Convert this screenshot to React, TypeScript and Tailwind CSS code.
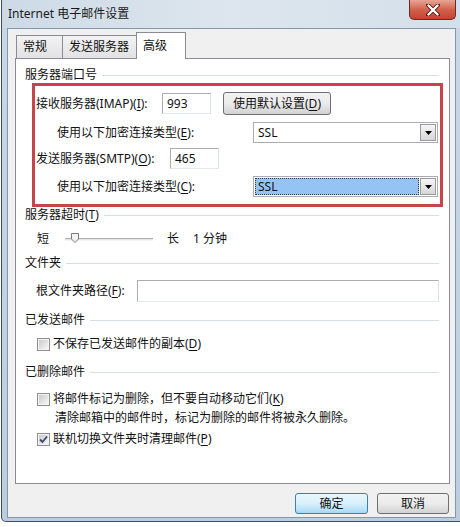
import React from "react";

const FONT = { fontFamily: '"Noto Sans", "Noto Sans CJK SC", sans-serif' };

function U({ c }: { c: string }) {
  return <span className="underline underline-offset-[2px]">{c}</span>;
}

function Header({ children }: { children: React.ReactNode }) {
  return (
    <div className="flex items-center h-[16px] mr-[5px]">
      <span className="whitespace-nowrap">{children}</span>
      <div className="flex-1 h-px bg-[#d5dfe5] ml-[5px]" />
    </div>
  );
}

function Checkbox({ checked }: { checked?: boolean }) {
  return (
    <div className="w-[13px] h-[13px] border border-[#8e8f8f] bg-[#f4f4f4] p-[1px] shrink-0">
      <div className="w-full h-full bg-gradient-to-br from-[#cbcbcb] to-[#f6f6f6] flex items-center justify-center">
        {checked && (
          <svg width="9" height="9" viewBox="0 0 9 9">
            <path d="M1 4.5 L3.5 7 L8 1.5" fill="none" stroke="#3b4a6b" strokeWidth="1.8" />
          </svg>
        )}
      </div>
    </div>
  );
}

function Select({ highlight }: { highlight?: boolean }) {
  return (
    <div className="w-[185px] h-[21px] border border-[#abadb3] bg-white flex items-center p-[1px]">
      <div
        className={
          highlight
            ? "flex-1 h-full bg-[#95c4f4] border border-dotted border-[#3a3a3a] flex items-center pl-[2px] mr-[1px]"
            : "flex-1 h-full flex items-center pl-[3px]"
        }
      >
        SSL
      </div>
      <div className="w-[16px] h-full border border-[#9a9a9a] bg-gradient-to-b from-[#f6f6f6] to-[#d6d6d6] flex items-center justify-center">
        <svg width="7" height="4" viewBox="0 0 7 4">
          <path d="M0 0 H7 L3.5 4 Z" fill="#000" />
        </svg>
      </div>
    </div>
  );
}

function Input({ value, w, h }: { value: string; w: string; h: string }) {
  return (
    <div className={`${w} ${h} border border-[#abadb3] border-r-[#dbdfe6] border-b-[#e3e9ef] bg-white flex items-center pl-[4px]`}>
      {value}
    </div>
  );
}

export default function App() {
  return (
    <div className="w-[460px] h-[527px] bg-white overflow-hidden text-[12px] leading-[16px] text-[#111]" style={FONT}>
      <div className="ml-[1px] w-[464px] h-[522px] border-x border-b border-[#3d4e60] rounded-bl-[5px] bg-gradient-to-b from-[#c9d8e6] to-[#bccede] flex flex-col">
        {/* title bar */}
        <div className="h-[28px] flex items-start pr-[8px] bg-gradient-to-r from-[#cddae6] via-[#dde6ee] to-[#d3dfea]">
          <div className="pl-[6px] pt-[6px] text-[12px] text-[#1a1a1a]">Internet 电子邮件设置</div>
          <div className="ml-auto w-[47px] h-[20px] rounded-b-[5px] border border-t-0 border-[#6b2a22] bg-gradient-to-b from-[#e6a694] via-[#d2614d] to-[#c4432e] flex items-center justify-center">
            <svg width="14" height="12" viewBox="0 0 14 12">
              <path d="M2 1 L12 11 M12 1 L2 11" stroke="#5a1c14" strokeWidth="4" strokeLinecap="round" />
              <path d="M2.5 1.5 L11.5 10.5 M11.5 1.5 L2.5 10.5" stroke="#fff" strokeWidth="2.4" strokeLinecap="round" />
            </svg>
          </div>
        </div>

        {/* client */}
        <div className="ml-[5px] w-[449px] h-[490px] border border-[#8497aa] bg-[#f0f0f0] flex flex-col pt-[4px]">
          {/* tabs */}
          <div className="h-[25px] flex items-end pl-[8px]">
            <div className="w-[47px] h-[23px] border border-b-0 border-[#898c95] bg-gradient-to-b from-[#f3f3f3] to-[#e2e2e2] pl-[6px] pt-[3px]">常规</div>
            <div className="w-[75px] h-[23px] -ml-px border border-b-0 border-[#898c95] bg-gradient-to-b from-[#f3f3f3] to-[#e2e2e2] pl-[6px] pt-[3px]">发送服务器</div>
            <div className="relative z-10 w-[50px] h-[27px] -ml-px -mb-px border border-b-0 border-[#898c95] bg-white pl-[6px] pt-[5px]">高级</div>
          </div>

          {/* panel */}
          <div className="ml-[7px] w-[435px] h-[426px] border border-[#898c95] bg-white pl-[9px] pr-[5px] pt-[8px] flex flex-col">
            <Header>服务器端口号</Header>

            <div className="ml-[7px] w-[411px] h-[124px] border-[3px] border-[#c8444c] pl-[1px] pt-[6px] flex flex-col">
              <div className="flex items-center h-[23px]">
                <div className="w-[126px]">
                  接收服务器(IMAP)(<U c="I" />):
                </div>
                <Input value="993" w="w-[49px]" h="h-[21px]" />
                <div className="ml-[12px] w-[108px] h-[23px] rounded-[3px] border border-[#707070] bg-gradient-to-b from-[#f2f2f2] via-[#ebebeb] to-[#d2d2d2] flex items-center justify-center">
                  使用默认设置(<U c="D" />)
                </div>
              </div>
              <div className="flex items-center h-[21px] mt-[7px] pl-[21px]">
                <div className="w-[196px]">
                  使用以下加密连接类型(<U c="E" />):
                </div>
                <Select />
              </div>
              <div className="flex items-center h-[21px] mt-[5px]">
                <div className="w-[134px]">
                  发送服务器(SMTP)(<U c="O" />):
                </div>
                <Input value="465" w="w-[49px]" h="h-[21px]" />
              </div>
              <div className="flex items-center h-[21px] mt-[7px] pl-[21px]">
                <div className="w-[196px]">
                  使用以下加密连接类型(<U c="C" />):
                </div>
                <Select highlight />
              </div>
            </div>

            <Header>
              服务器超时(<U c="T" />)
            </Header>

            <div className="flex items-center h-[16px] mt-[8px] pl-[12px]">
              <span className="w-[28px]">短</span>
              <div className="relative w-[88px] h-[16px] flex items-center">
                <div className="w-full h-[3px] border-t border-[#b0b0b0] border-b border-b-[#f4f4f4] bg-[#e4e4e4]" />
                <svg className="absolute left-[5px] top-[1px]" width="10" height="12" viewBox="0 0 10 12">
                  <path d="M1.5 1.5 H8.5 V7 L5 10.5 L1.5 7 Z" fill="#f3f3f3" stroke="#7a7a7a" />
                </svg>
              </div>
              <span className="ml-[14px] w-[26px]">长</span>
              <span>1 分钟</span>
            </div>

            <div className="mt-[8px]">
              <Header>文件夹</Header>
            </div>

            <div className="flex items-center h-[22px] mt-[9px] pl-[11px]">
              <div className="w-[101px]">
                根文件夹路径(<U c="F" />):
              </div>
              <div className="w-[302px] h-[22px] border border-[#abadb3] border-b-[#e3e9ef] border-r-[#dbdfe6] bg-white" />
            </div>

            <div className="mt-[10px]">
              <Header>已发送邮件</Header>
            </div>

            <div className="flex items-center h-[16px] mt-[8px] pl-[12px] gap-[3px]">
              <Checkbox />
              <span>
                不保存已发送邮件的副本(<U c="D" />)
              </span>
            </div>

            <div className="mt-[12px]">
              <Header>已删除邮件</Header>
            </div>

            <div className="flex items-center h-[16px] mt-[11px] pl-[12px] gap-[3px]">
              <Checkbox />
              <span>
                将邮件标记为删除，但不要自动移动它们(<U c="K" />)
              </span>
            </div>
            <div className="h-[16px] mt-[3px] pl-[30px]">清除邮箱中的邮件时，标记为删除的邮件将被永久删除。</div>
            <div className="flex items-center h-[16px] mt-[5px] pl-[12px] gap-[3px]">
              <Checkbox checked />
              <span>
                联机切换文件夹时清理邮件(<U c="P" />)
              </span>
            </div>
          </div>

          {/* buttons */}
          <div className="flex justify-end gap-[9px] pr-[6px] mt-[9px]">
            <div className="w-[73px] h-[21px] rounded-[3px] border border-[#3c7fb1] bg-gradient-to-b from-[#eaf6fd] via-[#d9f0fc] to-[#a7d9f5] flex items-center justify-center">
              确定
            </div>
            <div className="w-[72px] h-[21px] rounded-[3px] border border-[#707070] bg-gradient-to-b from-[#f2f2f2] via-[#ebebeb] to-[#d2d2d2] flex items-center justify-center">
              取消
            </div>
          </div>
        </div>
      </div>
    </div>
  );
}
